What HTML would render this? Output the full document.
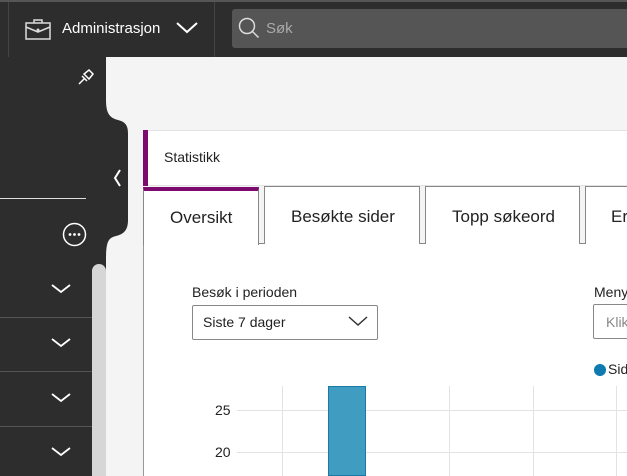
<!DOCTYPE html>
<html><head><style>
*{margin:0;padding:0;box-sizing:border-box}
body{width:627px;height:476px;overflow:hidden;background:#f4f4f4;font-family:"Liberation Sans","DejaVu Sans",sans-serif;position:relative}
.a{position:absolute}
.top{left:0;top:0;width:627px;height:57px;background:#2d2d2d;border-top:2px solid #555}
.t{color:#222}
</style></head><body>
<div class="a top"></div>
<div class="a" style="left:8px;top:2px;width:1px;height:55px;background:#444"></div>
<div class="a" style="left:214px;top:2px;width:1px;height:55px;background:#444"></div>
<svg class="a" style="left:25px;top:18px" width="26" height="22" viewBox="0 0 26 22"><rect x="1" y="5" width="24" height="16" fill="none" stroke="#ddd" stroke-width="1.5"/><path d="M9 5V2h8v3M1 9l12 5 12-5" fill="none" stroke="#ddd" stroke-width="1.5"/><circle cx="13" cy="12" r="1.5" fill="#ddd"/></svg>
<div class="a" style="left:62px;top:20px;color:#fff;font-size:15px">Administrasjon</div>
<svg class="a" style="left:176px;top:22px" width="22" height="12"><path d="M1 1l10 9 10-9" fill="none" stroke="#fff" stroke-width="2"/></svg>
<div class="a" style="left:232px;top:9px;width:400px;height:39px;background:#555;border-radius:3px"></div>
<svg class="a" style="left:238px;top:17px" width="22" height="22"><circle cx="9" cy="9" r="7.5" fill="none" stroke="#ddd" stroke-width="1.5"/><path d="M14.5 14.5l6 6" stroke="#ddd" stroke-width="1.5"/></svg>
<div class="a" style="left:266px;top:20px;color:#aaa;font-size:15px">Søk</div>
<div class="a" style="left:0;top:57px;width:106px;height:419px;background:#2d2d2d"></div>
<svg class="a" style="left:100px;top:100px" width="30" height="160"><path d="M6 0 C6 14 10 18 18 20 C26 22 28 26 28 34 L28 120 C28 130 24 134 16 136 C8 138 6 142 6 160 L0 160 L0 0Z" fill="#2d2d2d"/><path d="M20 70l-5 8 5 8" fill="none" stroke="#fff" stroke-width="2"/></svg>
<svg class="a" style="left:77px;top:68px" width="18" height="18"><path d="M2 16l5-5M5 8l5 5M7 6l5 5 4-5-4-4z" fill="none" stroke="#fff" stroke-width="1.5"/></svg>
<div class="a" style="left:0;top:198px;width:86px;height:1px;background:#ddd"></div>
<svg class="a" style="left:62px;top:222px" width="25" height="25"><circle cx="12.5" cy="12.5" r="11" fill="none" stroke="#fff" stroke-width="1.5"/><circle cx="8" cy="12.5" r="1.4" fill="#fff"/><circle cx="12.5" cy="12.5" r="1.4" fill="#fff"/><circle cx="17" cy="12.5" r="1.4" fill="#fff"/></svg>
<div class="a" style="left:0;top:317px;width:92px;height:1px;background:#555"></div>
<div class="a" style="left:0;top:371px;width:92px;height:1px;background:#555"></div>
<div class="a" style="left:0;top:426px;width:92px;height:1px;background:#555"></div>
<svg class="a" style="left:50px;top:283px" width="22" height="180"><g fill="none" stroke="#fff" stroke-width="1.8"><path d="M2 2l9 7 9-7"/><path d="M2 56l9 7 9-7"/><path d="M2 111l9 7 9-7"/><path d="M2 165l9 7 9-7"/></g></svg>
<div class="a" style="left:92px;top:264px;width:14px;height:212px;background:#d6d6d6;border-radius:7px 7px 0 0"></div>
<div class="a" style="left:143px;top:130px;width:484px;height:56px;background:#fff;border-top:1px solid #e3e3e3;border-bottom:1px solid #e3e3e3"></div>
<div class="a" style="left:143px;top:130px;width:5px;height:56px;background:#7d0b6f"></div>
<div class="a t" style="left:164px;top:149px;font-size:14px">Statistikk</div>
<div class="a" style="left:143px;top:244px;width:484px;height:232px;background:#fff;border-left:1px solid #999"></div>
<div class="a" style="left:143px;top:243px;width:484px;height:1px;background:#888"></div>
<div class="a" style="left:143px;top:187px;width:116px;height:58px;background:#fff;border-right:1px solid #888;border-left:1px solid #888;border-top:4px solid #7d0b6f"></div>
<div class="a t" style="left:170px;top:208px;font-size:17px">Oversikt</div>
<div class="a" style="left:264px;top:186px;width:156px;height:58px;background:#fff;border:1px solid #888;border-bottom:none"></div>
<div class="a t" style="left:291px;top:207px;font-size:17px">Besøkte sider</div>
<div class="a" style="left:425px;top:186px;width:155px;height:58px;background:#fff;border:1px solid #888;border-bottom:none"></div>
<div class="a t" style="left:452px;top:207px;font-size:17px">Topp søkeord</div>
<div class="a" style="left:585px;top:186px;width:50px;height:58px;background:#fff;border:1px solid #888;border-bottom:none"></div>
<div class="a t" style="left:611px;top:207px;font-size:17px">Er</div>
<div class="a t" style="left:192px;top:284px;font-size:14px">Besøk i perioden</div>
<div class="a" style="left:192px;top:305px;width:186px;height:35px;border:1px solid #888;border-radius:2px"></div>
<div class="a t" style="left:203px;top:314px;font-size:14px">Siste 7 dager</div>
<svg class="a" style="left:348px;top:316px" width="20" height="12"><path d="M1 1l9 8 9-8" fill="none" stroke="#333" stroke-width="1.5"/></svg>
<div class="a t" style="left:594px;top:284px;font-size:14px">Meny</div>
<div class="a" style="left:593px;top:304px;width:40px;height:35px;border:1px solid #888;border-radius:2px"></div>
<div class="a" style="left:606px;top:314px;font-size:14px;color:#888">Klik</div>
<div class="a" style="left:594px;top:364px;width:12px;height:12px;border-radius:50%;background:#0e7ab0"></div>
<div class="a t" style="left:608px;top:361px;font-size:14px">Sid</div>
<div class="a" style="left:237px;top:410px;width:390px;height:1px;background:#e3e3e3"></div>
<div class="a" style="left:237px;top:452px;width:390px;height:1px;background:#e3e3e3"></div>
<div class="a" style="left:282px;top:386px;width:1px;height:90px;background:#e3e3e3"></div>
<div class="a" style="left:449px;top:386px;width:1px;height:90px;background:#e3e3e3"></div>
<div class="a" style="left:533px;top:386px;width:1px;height:90px;background:#e3e3e3"></div>
<div class="a" style="left:616px;top:386px;width:1px;height:90px;background:#e3e3e3"></div>
<div class="a t" style="left:215px;top:402px;font-size:14px">25</div>
<div class="a t" style="left:215px;top:444px;font-size:14px">20</div>
<div class="a" style="left:328px;top:386px;width:38px;height:90px;background:#409dc1;border:1px solid #1a7aa6"></div>
</body></html>
